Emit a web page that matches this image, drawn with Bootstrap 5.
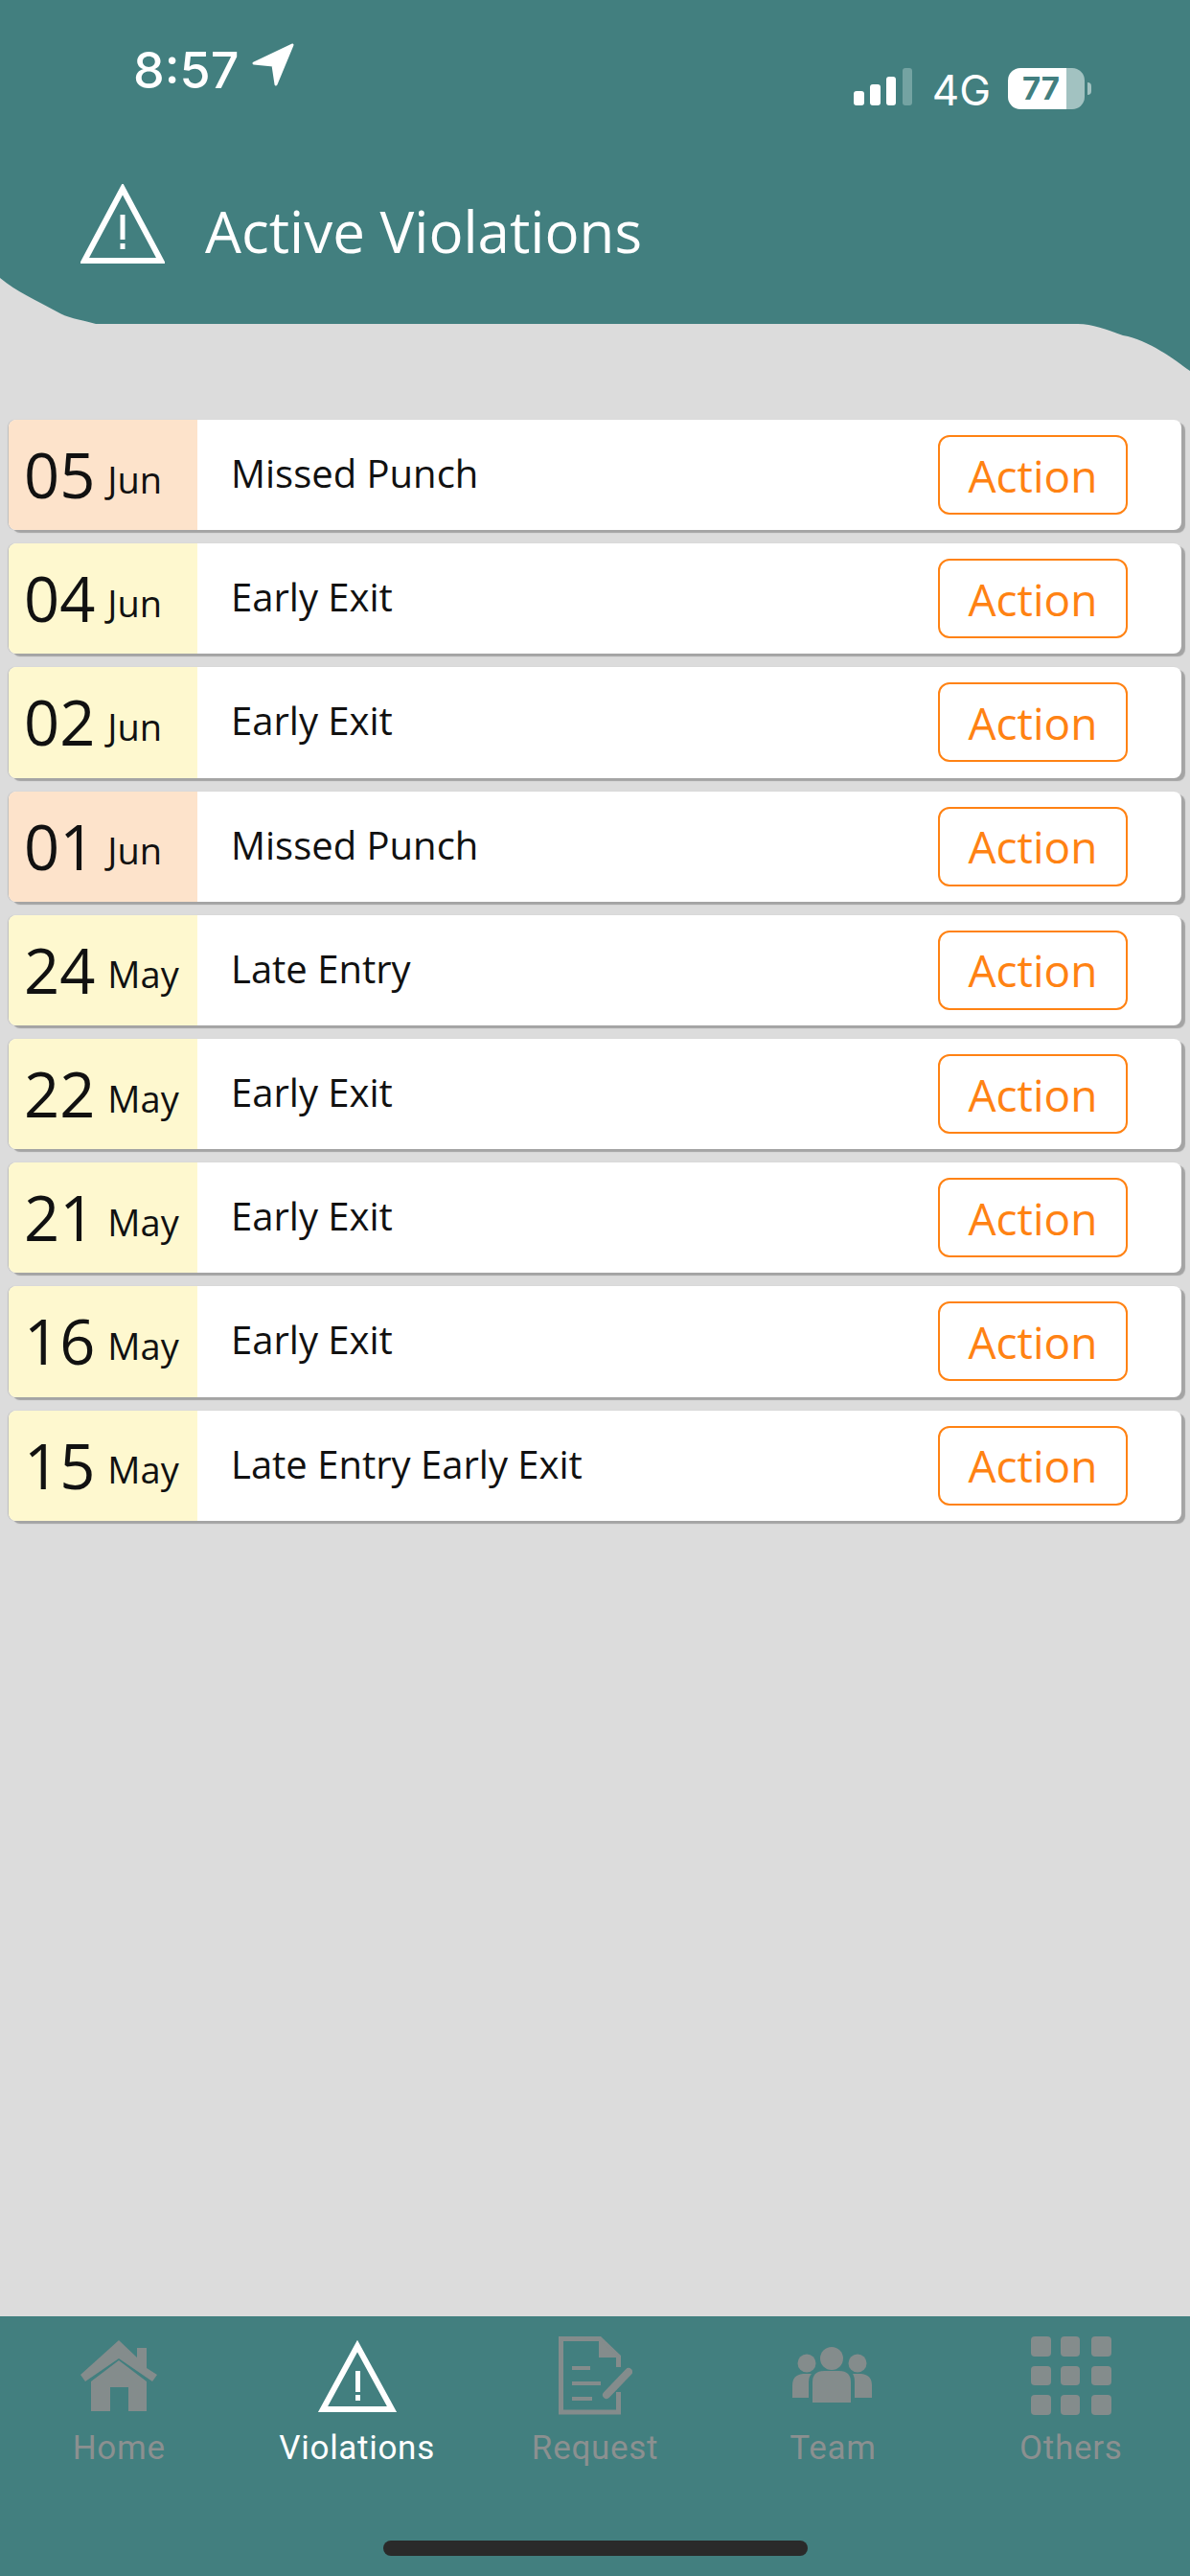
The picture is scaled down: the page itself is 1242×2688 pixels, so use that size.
<!DOCTYPE html>
<html lang="en">
<head>
  <meta charset="UTF-8" />
  <meta name="viewport" content="width=device-width, initial-scale=1" />
  <title>Active Violations</title>
  <link href="https://cdn.jsdelivr.net/npm/bootstrap@5.3.3/dist/css/bootstrap.min.css" rel="stylesheet" />
  <style>
    body { background: #dcdcdc; width: 1242px; height: 2688px; overflow: hidden; font-family: "Open Sans", "Noto Sans", sans-serif; }
    .app-shell { height: 2688px; }

    /* header with the wavy lower edge */
    .top-head { height: 388px; background: #427f7f; color: #fff; clip-path: path("M0 0H1242V387C1225 375 1200 355 1172 350C1155 344 1140 338 1125 338H100C82 333 70 332 59 325C36 312 18 305 0 290Z"); }
    .status-row { padding: 44px 0 0 139px; height: 192px; }
    .clock { font-family: Inter, Roboto, sans-serif; font-size: 52px; font-weight: 500; line-height: 1; margin-top: 4px; }
    .loc-arrow { margin-left: 12px; }
    .status-right { padding: 27px 103px 0 0; gap: 21px; }
    .net-label { font-family: Inter, Roboto, sans-serif; font-size: 44px; line-height: 1; margin-top: 1px; margin-right: -3px; }
    .batt { width: 80px; height: 43px; border-radius: 13px; background: linear-gradient(90deg, #fff 76%, #a2c2c1 76%); color: #427f7f; font-family: Inter, Roboto, sans-serif; font-weight: 700; font-size: 33px; line-height: 43px; padding-left: 15px; }
    .batt-cap { width: 4px; height: 13px; background: #a2c2c1; border-radius: 0 4px 4px 0; margin-left: 3px; }
    .title-row { padding-left: 84px; gap: 42px; }
    .page-title { font-size: 60px; font-weight: 400; line-height: 1; margin: 14px 0 0; }

    /* violation rows */
    .violation-list { padding: 50px 9px 0 9px; gap: 14px; }
    .violation-row { height: 115.2px; background: #fff; border-radius: 8px; box-shadow: 4px 3px 1px #a4a4a4, -1px 0 1px #bdbdbd; }
    .date-box { width: 197px; border-radius: 8px 0 0 8px; padding-left: 16px; color: #111; }
    .date-peach { background: #fde3cb; }
    .date-yellow { background: #fef8cf; }
    .date-day { font-size: 65px; line-height: 1; }
    .date-month { font-size: 38px; line-height: 1; margin-left: 13px; }
    .viol-name { font-size: 40px; color: #111; padding-left: 35px; line-height: 1; margin-top: -3px; }
    .action-btn { width: 198px; height: 83px; margin-right: 56px; font-size: 46px; line-height: 1; color: #ff8213; border: 2px solid #ff8213; border-radius: 12px; background: #fff; padding: 0; }
    .action-btn:hover { color: #ff8213; border-color: #ff8213; }

    /* bottom tabs */
    .tab-bar { height: 271px; background: #427f7f; }
    .tab-item { flex: 1 1 0; padding-top: 21px; color: #8b9090; font-family: Roboto, sans-serif; font-size: 35px; line-height: 1; letter-spacing: .7px; }
    .tab-item.active-tab { color: #fff; }
    .tab-icon { height: 82px; margin-bottom: 17px; }
    .home-bar { width: 443px; height: 16px; border-radius: 8px; background: #2a2a2a; left: 400px; top: 234px; }
  </style>
</head>
<body>
  <div class="app-shell d-flex flex-column">
    <header class="top-head">
      <div class="status-row d-flex justify-content-between align-items-start">
        <div class="d-flex align-items-start">
          <span class="clock">8:57</span>
          <svg class="loc-arrow" width="46" height="46" viewBox="0 0 46 46"><path d="M44 3 4 22l20 2 3 20z" fill="#fff" stroke="#fff" stroke-width="3" stroke-linejoin="round"/></svg>
        </div>
        <div class="status-right d-flex align-items-start">
          <svg width="61" height="40" viewBox="0 0 61 40">
            <rect x="0" y="24" width="11" height="15" rx="3" fill="#fff"/>
            <rect x="17" y="17" width="11" height="22" rx="3" fill="#fff"/>
            <rect x="34" y="9" width="10" height="30" rx="3" fill="#fff"/>
            <rect x="51" y="0" width="10" height="39" rx="3" fill="#74a3a2"/>
          </svg>
          <span class="net-label">4G</span>
          <div class="d-flex align-items-center">
            <div class="batt">77</div>
            <div class="batt-cap"></div>
          </div>
        </div>
      </div>
      <div class="title-row d-flex align-items-center">
        <svg width="88" height="84" viewBox="0 0 88 84">
          <path d="M44 5 4 80h80z" fill="none" stroke="#fff" stroke-width="6"/>
          <rect x="41.5" y="32" width="5" height="26" fill="#fff"/>
          <rect x="41.5" y="62" width="5" height="6" fill="#fff"/>
        </svg>
        <h1 class="page-title">Active Violations</h1>
      </div>
    </header>

    <main id="violationList" class="violation-list d-flex flex-column flex-grow-1"></main>

    <nav class="tab-bar d-flex position-relative">
      <div class="tab-item d-flex flex-column align-items-center">
        <div class="tab-icon d-flex align-items-center">
          <svg width="80" height="74" viewBox="0 0 80 74" fill="#848c8c">
            <path d="M40 0 59 18V8H69V29L80 36 75 43 40 19 5 43 0 36z"/>
            <path d="M40 21 69 43V74H50V49H31V74H11V43z"/>
          </svg>
        </div>
        <span>Home</span>
      </div>
      <div class="tab-item active-tab d-flex flex-column align-items-center">
        <div class="tab-icon d-flex align-items-center">
          <svg width="84" height="78" viewBox="0 0 84 78">
            <path d="M42 8 6 74h72z" fill="none" stroke="#fff" stroke-width="6"/>
            <rect x="40" y="34" width="5" height="22" fill="#fff"/>
            <rect x="40" y="59" width="5" height="6" fill="#fff"/>
          </svg>
        </div>
        <span>Violations</span>
      </div>
      <div class="tab-item d-flex flex-column align-items-center">
        <div class="tab-icon d-flex align-items-center">
          <svg width="77" height="82" viewBox="0 0 77 82" fill="none" stroke="#848c8c">
            <path d="M62.5 32V21L43 2.5H2.5V79H62.5V58" stroke-width="5"/>
            <path d="M43 2.5V21H62.5z" fill="#848c8c" stroke-width="2"/>
            <path d="M14 33H33M14 49H44M14 65H35" stroke-width="4"/>
            <path d="M50 61 73 37" stroke-width="8" stroke-linecap="round"/>
          </svg>
        </div>
        <span>Request</span>
      </div>
      <div class="tab-item d-flex flex-column align-items-center">
        <div class="tab-icon d-flex align-items-center">
          <svg width="84" height="60" viewBox="0 0 84 60" fill="#848c8c">
            <circle cx="41" cy="12" r="12"/>
            <circle cx="15" cy="17" r="9.5"/>
            <circle cx="68" cy="17" r="9.5"/>
            <path d="M21 37Q21 25 33 25H49Q61 25 61 37V58H21z"/>
            <path d="M0 40Q0 29 11 28H20Q17 31 17 37V53H0z"/>
            <path d="M63 28H72Q83 29 83 40V53H65V37Q65 31 63 28z"/>
          </svg>
        </div>
        <span>Team</span>
      </div>
      <div class="tab-item d-flex flex-column align-items-center">
        <div class="tab-icon d-flex align-items-center">
          <svg width="84" height="82" viewBox="0 0 84 82" fill="#848c8c">
            <rect x="0" y="0" width="21" height="21" rx="4"/><rect x="31" y="0" width="20" height="21" rx="4"/><rect x="63" y="0" width="21" height="21" rx="4"/>
            <rect x="0" y="31" width="21" height="20" rx="4"/><rect x="31" y="31" width="20" height="20" rx="4"/><rect x="63" y="31" width="21" height="20" rx="4"/>
            <rect x="0" y="61" width="21" height="21" rx="4"/><rect x="31" y="61" width="20" height="21" rx="4"/><rect x="63" y="61" width="21" height="21" rx="4"/>
          </svg>
        </div>
        <span>Others</span>
      </div>
      <div class="home-bar position-absolute"></div>
    </nav>
  </div>

  <script>
    // rows of the list
    const violations = [
      ["05", "Jun", "Missed Punch", "date-peach"],
      ["04", "Jun", "Early Exit", "date-yellow"],
      ["02", "Jun", "Early Exit", "date-yellow"],
      ["01", "Jun", "Missed Punch", "date-peach"],
      ["24", "May", "Late Entry", "date-yellow"],
      ["22", "May", "Early Exit", "date-yellow"],
      ["21", "May", "Early Exit", "date-yellow"],
      ["16", "May", "Early Exit", "date-yellow"],
      ["15", "May", "Late Entry Early Exit", "date-yellow"]
    ];

    document.getElementById("violationList").innerHTML = violations.map(v => `
      <div class="violation-row d-flex align-items-center">
        <div class="date-box ${v[3]} h-100 d-flex align-items-center">
          <span class="date-day">${v[0]}</span><span class="date-month mt-2">${v[1]}</span>
        </div>
        <div class="viol-name flex-grow-1">${v[2]}</div>
        <button type="button" class="btn action-btn">Action</button>
      </div>`).join("");
  </script>
  <script src="https://cdn.jsdelivr.net/npm/bootstrap@5.3.3/dist/js/bootstrap.bundle.min.js"></script>
</body>
</html>
